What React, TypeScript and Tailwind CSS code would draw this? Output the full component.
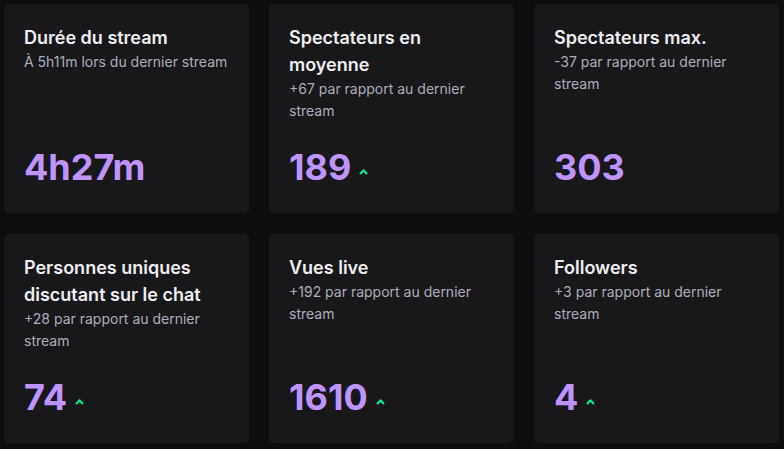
const stats = [
  { title: "Durée du stream", sub: "À 5h11m lors du dernier stream", value: "4h27m", up: false },
  { title: "Spectateurs en moyenne", sub: "+67 par rapport au dernier stream", value: "189", up: true },
  { title: "Spectateurs max.", sub: "-37 par rapport au dernier stream", value: "303", up: false },
  { title: "Personnes uniques discutant sur le chat", sub: "+28 par rapport au dernier stream", value: "74", up: true },
  { title: "Vues live", sub: "+192 par rapport au dernier stream", value: "1610", up: true },
  { title: "Followers", sub: "+3 par rapport au dernier stream", value: "4", up: true },
];

function UpArrow() {
  return (
    <svg width="9" height="6" viewBox="0 0 9 6" className="mb-[12px] ml-2">
      <path d="M1 5 L4.5 1.5 L8 5" fill="none" stroke="#00f593" strokeWidth="2" />
    </svg>
  );
}

function StatCard({ title, sub, value, up }: (typeof stats)[number]) {
  return (
    <div className="flex h-[209px] flex-col rounded-[5px] bg-[#18181b] px-5 pt-5 pb-[26px]">
      <h3 className="text-[18px] font-semibold leading-[27px] text-[#efeff1]">{title}</h3>
      <p className="text-[14px] leading-[22px] text-[#adadb8]">{sub}</p>
      <div className="mt-auto flex items-end">
        <span className="text-[36px] font-bold leading-[40px] text-[#bf94ff]">{value}</span>
        {up && <UpArrow />}
      </div>
    </div>
  );
}

export default function App() {
  return (
    <div
      className="min-h-[449px] bg-[#0e0e10] pt-1 pl-1"
      style={{ fontFamily: "Inter, 'Noto Sans', sans-serif" }}
    >
      <div className="grid grid-cols-[repeat(3,245px)] gap-x-5 gap-y-[21px]">
        {stats.map((s) => (
          <StatCard key={s.title} {...s} />
        ))}
      </div>
    </div>
  );
}
